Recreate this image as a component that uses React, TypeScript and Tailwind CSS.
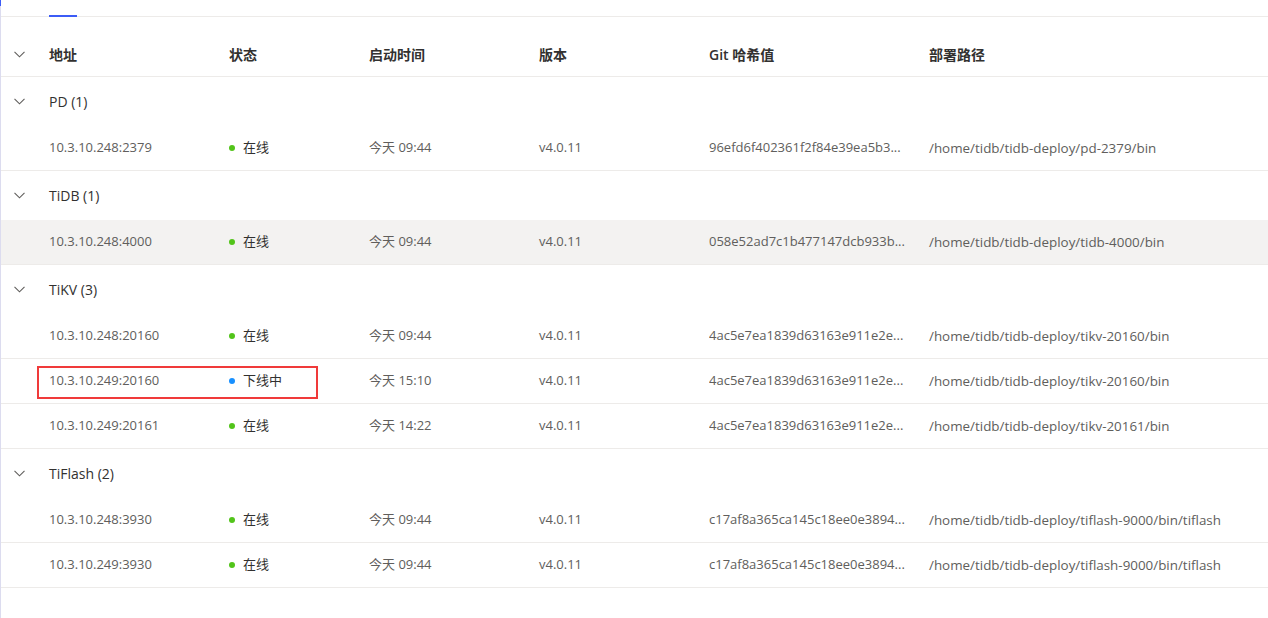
import React from "react";

type Row = { addr: string; status: "up" | "down"; time: string; ver: string; hash: string; path: string; hl?: boolean; boxed?: boolean };
type Group = { name: string; rows: Row[] };

const groups: Group[] = [
  { name: "PD (1)", rows: [{ addr: "10.3.10.248:2379", status: "up", time: "今天 09:44", ver: "v4.0.11", hash: "96efd6f402361f2f84e39ea5b3...", path: "/home/tidb/tidb-deploy/pd-2379/bin" }] },
  { name: "TiDB (1)", rows: [{ addr: "10.3.10.248:4000", status: "up", time: "今天 09:44", ver: "v4.0.11", hash: "058e52ad7c1b477147dcb933b...", path: "/home/tidb/tidb-deploy/tidb-4000/bin", hl: true }] },
  {
    name: "TiKV (3)",
    rows: [
      { addr: "10.3.10.248:20160", status: "up", time: "今天 09:44", ver: "v4.0.11", hash: "4ac5e7ea1839d63163e911e2e...", path: "/home/tidb/tidb-deploy/tikv-20160/bin" },
      { addr: "10.3.10.249:20160", status: "down", time: "今天 15:10", ver: "v4.0.11", hash: "4ac5e7ea1839d63163e911e2e...", path: "/home/tidb/tidb-deploy/tikv-20160/bin", boxed: true },
      { addr: "10.3.10.249:20161", status: "up", time: "今天 14:22", ver: "v4.0.11", hash: "4ac5e7ea1839d63163e911e2e...", path: "/home/tidb/tidb-deploy/tikv-20161/bin" },
    ],
  },
  {
    name: "TiFlash (2)",
    rows: [
      { addr: "10.3.10.248:3930", status: "up", time: "今天 09:44", ver: "v4.0.11", hash: "c17af8a365ca145c18ee0e3894...", path: "/home/tidb/tidb-deploy/tiflash-9000/bin/tiflash" },
      { addr: "10.3.10.249:3930", status: "up", time: "今天 09:44", ver: "v4.0.11", hash: "c17af8a365ca145c18ee0e3894...", path: "/home/tidb/tidb-deploy/tiflash-9000/bin/tiflash" },
    ],
  },
];

function Chevron() {
  return (
    <svg width="11" height="7" viewBox="0 0 11 7" fill="none">
      <path d="M0.5 0.8 L5.5 5.8 L10.5 0.8" stroke="#605e5c" strokeWidth="1.1" />
    </svg>
  );
}

const font = { fontFamily: '"Open Sans", "Noto Sans", "Noto Sans CJK SC", sans-serif' };

export default function App() {
  return (
    <div className="flex min-h-[618px] w-[1268px] bg-white overflow-hidden" style={font}>
      <div className="w-px shrink-0 bg-[#dcdcef] flex flex-col">
        <div className="h-[6px] bg-[#3c5cf6]" />
      </div>
      <div className="flex-1 min-w-0">
        <div className="h-[17px] border-b border-[#edebe9] flex items-end pl-[48px]">
          <div className="w-[28px] h-[2px] bg-[#3c5cf6] translate-y-px" />
        </div>
        <div className="pt-[15px] border-b border-[#edebe9]">
          <div className="h-[44px] flex items-center text-[14px] font-semibold text-[#323130]">
            <div className="w-[48px] flex pl-[13px]"><Chevron /></div>
            <div className="w-[180px]">地址</div>
            <div className="w-[140px]">状态</div>
            <div className="w-[170px]">启动时间</div>
            <div className="w-[170px]">版本</div>
            <div className="w-[220px]">Git 哈希值</div>
            <div>部署路径</div>
          </div>
        </div>
        {groups.map((g) => (
          <div key={g.name}>
            <div className="h-[49px] flex items-center text-[14px] text-[#323130]">
              <div className="w-[48px] flex pl-[13px]"><Chevron /></div>
              <div>{g.name}</div>
            </div>
            {g.rows.map((r, i) => (
              <div
                key={i}
                className={`relative h-[45px] border-b border-[#edebe9] flex items-center text-[13px] text-[#605e5c] whitespace-nowrap ${r.hl ? "bg-[#f3f2f1]" : ""}`}
              >
                <div className="w-[48px]" />
                <div className="w-[180px]">{r.addr}</div>
                <div className="w-[140px] flex items-center text-[#323130]">
                  <span className={`w-[6px] h-[6px] rounded-full mr-[8px] ${r.status === "up" ? "bg-[#52c41a]" : "bg-[#1890ff]"}`} />
                  <span>{r.status === "up" ? "在线" : "下线中"}</span>
                </div>
                <div className="w-[170px]">{r.time}</div>
                <div className="w-[170px]">{r.ver}</div>
                <div className="w-[220px] overflow-hidden pr-[10px]">{r.hash}</div>
                <div className="text-[13.4px]">{r.path}</div>
                {r.boxed && (
                  <div className="absolute left-[36px] top-[7px] w-[281px] h-[33px] border-2 border-[#f03a3a] pointer-events-none" />
                )}
              </div>
            ))}
          </div>
        ))}
      </div>
    </div>
  );
}
